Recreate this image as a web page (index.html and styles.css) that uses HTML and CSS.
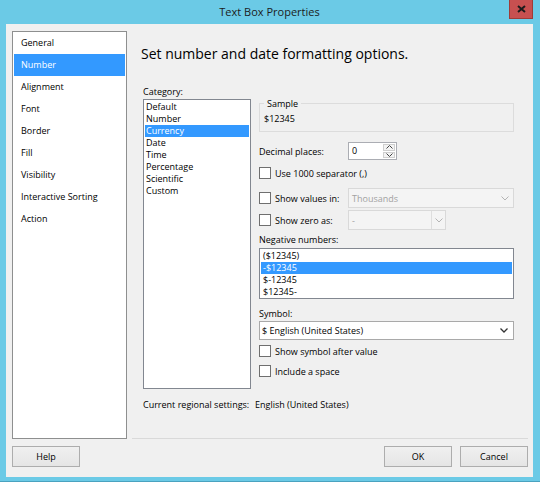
FILE: index.html
```html
<!DOCTYPE html>
<html lang="en">
<head>
  <meta charset="UTF-8" />
  <title>Text Box Properties</title>
  <link rel="stylesheet" href="styles.css">
</head>
<body>
  <div class="window">
    <div class="titlebar">
      <span class="title">Text Box Properties</span>
      <button class="close" title="Close">
        <svg width="9" height="8" viewBox="0 0 9 8"><path d="M1 1 L8 7 M8 1 L1 7" stroke="#1b1b1b" stroke-width="2" fill="none"/></svg>
      </button>
    </div>

    <div class="client">
      <!-- pages of the dialog -->
      <ul class="nav">
        <li>General</li>
        <li class="active">Number</li>
        <li>Alignment</li>
        <li>Font</li>
        <li>Border</li>
        <li>Fill</li>
        <li>Visibility</li>
        <li>Interactive Sorting</li>
        <li>Action</li>
      </ul>

      <div class="page">
        <h1>Set number and date formatting options.</h1>

        <div class="columns">
          <div class="category">
            <div class="caption">Category:</div>
            <ul class="listbox category-list">
              <li>Default</li>
              <li>Number</li>
              <li class="selected">Currency</li>
              <li>Date</li>
              <li>Time</li>
              <li>Percentage</li>
              <li>Scientific</li>
              <li>Custom</li>
            </ul>
          </div>

          <div class="options">
            <fieldset class="sample">
              <legend>Sample</legend>
              <div>$12345</div>
            </fieldset>

            <div class="field-row decimal">
              <span>Decimal places:</span>
              <div class="spin">
                <span class="spin-value">0</span>
                <span class="spin-btns">
                  <span><svg width="7" height="4" viewBox="0 0 7 4"><path d="M0.5 3.5 L3.5 0.5 L6.5 3.5" stroke="#444" fill="none"/></svg></span>
                  <span><svg width="7" height="4" viewBox="0 0 7 4"><path d="M0.5 0.5 L3.5 3.5 L6.5 0.5" stroke="#444" fill="none"/></svg></span>
                </span>
              </div>
            </div>

            <label class="check sep"><input type="checkbox"> Use 1000 separator (,)</label>

            <div class="field-row values">
              <label class="check"><input type="checkbox"> Show values in:</label>
              <div class="combo disabled wide">
                <span>Thousands</span>
                <svg width="8" height="5" viewBox="0 0 8 5"><path d="M0.5 0.5 L4 4 L7.5 0.5" stroke="#b4b4b4" fill="none"/></svg>
              </div>
            </div>

            <div class="field-row zero">
              <label class="check"><input type="checkbox"> Show zero as:</label>
              <div class="combo disabled narrow">
                <span>-</span>
                <span class="drop-btn"><svg width="8" height="5" viewBox="0 0 8 5"><path d="M0.5 0.5 L4 4 L7.5 0.5" stroke="#b4b4b4" fill="none"/></svg></span>
              </div>
            </div>

            <div class="caption neg-caption">Negative numbers:</div>
            <ul class="listbox negative-list">
              <li>($12345)</li>
              <li class="selected">-$12345</li>
              <li>$-12345</li>
              <li>$12345-</li>
            </ul>

            <div class="caption symbol-caption">Symbol:</div>
            <div class="combo symbol">
              <span>$ English (United States)</span>
              <svg width="8" height="5" viewBox="0 0 8 5"><path d="M0.5 0.5 L4 4 L7.5 0.5" stroke="#333" stroke-width="1.3" fill="none"/></svg>
            </div>

            <label class="check after"><input type="checkbox"> Show symbol after value</label>
            <label class="check space"><input type="checkbox"> Include a space</label>
          </div>
        </div>

        <div class="regional">
          <span>Current regional settings:</span>
          <span>English (United States)</span>
        </div>
      </div>

      <div class="dlg-buttons">
        <button class="btn">Help</button>
        <button class="btn ok">OK</button>
        <button class="btn">Cancel</button>
      </div>
    </div>
  </div>
</body>
</html>
```

FILE: styles.css
```css
body {
  margin: 0;
  font-family: "Open Sans", "Noto Sans", sans-serif;
  font-size: 9px;
  color: #000;
}

ul {
  list-style: none;
  margin: 0;
  padding: 0;
}

.window {
  width: 540px;
  height: 482px;
  box-sizing: border-box;
  background: #6bcae6;
  padding: 0 7px 4px 6px;
  border-bottom: 1px solid #4aa2bf;
  display: flex;
  flex-direction: column;
}

/* title bar */
.titlebar {
  height: 24px;
  flex: none;
  display: grid;
  grid-template-columns: 1fr auto 1fr;
  align-items: start;
}

.title {
  grid-column: 2;
  font-size: 11px;
  line-height: 24px;
  color: #1c1c1c;
}

.close {
  grid-column: 3;
  justify-self: end;
  width: 24px;
  height: 19px;
  padding: 0;
  background: #c75050;
  border: 1px solid #9e3c38;
  border-top: none;
  display: flex;
  align-items: center;
  justify-content: center;
}

/* dialog body */
.client {
  flex: 1;
  background: #f0f0f0;
  display: grid;
  grid-template-columns: 115px 1fr;
  grid-template-rows: 1fr auto;
  column-gap: 5px;
  row-gap: 7px;
  padding: 7px 5px 10px 6px;
}

.nav {
  background: #fff;
  border: 1px solid #8e8f8f;
  padding: 0 1px;
}

.nav li {
  line-height: 22px;
  padding-left: 7px;
}

.nav li.active {
  background: #3399ff;
  color: #fff;
}

.page {
  display: flex;
  flex-direction: column;
  padding: 14px 14px 0 11px;
  border-bottom: 1px solid #d9d9d9;
}

h1 {
  margin: 0 0 22px -2px;
  font-size: 14px;
  line-height: 18px;
  font-weight: 400;
}

.caption {
  line-height: 13px;
}

.columns {
  display: grid;
  grid-template-columns: 108px 255px;
  column-gap: 8px;
  align-items: start;
}

.listbox {
  background: #fff;
  border: 1px solid #828790;
  padding: 1px 1px 0;
}

.listbox li {
  line-height: 12px;
  white-space: nowrap;
}

.listbox li.selected {
  background: #3399ff;
  color: #fff;
}

.category-list {
  margin-top: 1px;
  height: 290px;
  box-sizing: border-box;
}

.category-list li {
  padding-left: 1px;
}

.options {
  display: flex;
  flex-direction: column;
  line-height: 13px;
}

.sample {
  margin: 12px 0 0;
  padding: 2px 4px 6px;
  border: 1px solid #dcdcdc;
  min-inline-size: 0;
}

.sample legend {
  padding: 0 3px;
  line-height: 13px;
}

.field-row {
  display: grid;
  grid-template-columns: 89px auto;
  align-items: center;
}

.decimal {
  margin-top: 10px;
  height: 18px;
}

.spin {
  width: 49px;
  height: 18px;
  box-sizing: border-box;
  border: 1px solid #abadb3;
  background: #fff;
  display: flex;
}

.spin-value {
  flex: 1;
  padding-left: 3px;
  line-height: 16px;
}

.spin-btns {
  width: 12px;
  display: flex;
  flex-direction: column;
  gap: 1px;
  padding: 1px;
  background: #fff;
}

.spin-btns span {
  flex: 1;
  background: #f3f3f3;
  border: 1px solid #cfcfcf;
  display: flex;
  align-items: center;
  justify-content: center;
}

.check {
  display: flex;
  align-items: center;
  gap: 4px;
  height: 12px;
  white-space: nowrap;
}

.check input {
  appearance: none;
  margin: 0;
  width: 12px;
  height: 12px;
  flex: none;
  border: 1px solid #6f6f6f;
  background: #fff;
}

.sep {
  margin-top: 7px;
}

.values {
  margin-top: 9px;
  height: 20px;
}

.zero {
  margin-top: 2px;
  height: 20px;
}

.combo {
  height: 20px;
  box-sizing: border-box;
  display: flex;
  align-items: center;
  justify-content: space-between;
  padding-left: 3px;
}

.combo.disabled {
  background: #f4f4f4;
  border: 1px solid #d9d9d9;
  color: #a2a2a2;
}

.combo.wide {
  width: 166px;
  padding-right: 4px;
}

.combo.narrow {
  width: 98px;
}

.drop-btn {
  width: 13px;
  height: 100%;
  border-left: 1px solid #dedede;
  display: flex;
  align-items: center;
  justify-content: center;
}

.neg-caption {
  margin-top: 3px;
}

.negative-list {
  margin-top: 2px;
  height: 51px;
  box-sizing: border-box;
}

.negative-list li {
  padding-left: 2px;
}

.symbol-caption {
  margin-top: 8px;
}

.combo.symbol {
  margin-top: 1px;
  height: 19px;
  background: #fff;
  border: 1px solid #a9a9a9;
  padding: 0 5px 0 2px;
}

.after {
  margin-top: 5px;
}

.space {
  margin-top: 8px;
}

.regional {
  margin-top: 9px;
  line-height: 13px;
  display: grid;
  grid-template-columns: 112px auto;
}

/* bottom buttons */
.dlg-buttons {
  grid-column: 1 / -1;
  display: flex;
  gap: 8px;
}

.btn {
  width: 68px;
  height: 21px;
  padding: 0;
  border: 1px solid #adadad;
  background: linear-gradient(#f0f0f0, #e5e5e5);
  font: inherit;
  color: #000;
}

.btn.ok {
  margin-left: auto;
}
```
